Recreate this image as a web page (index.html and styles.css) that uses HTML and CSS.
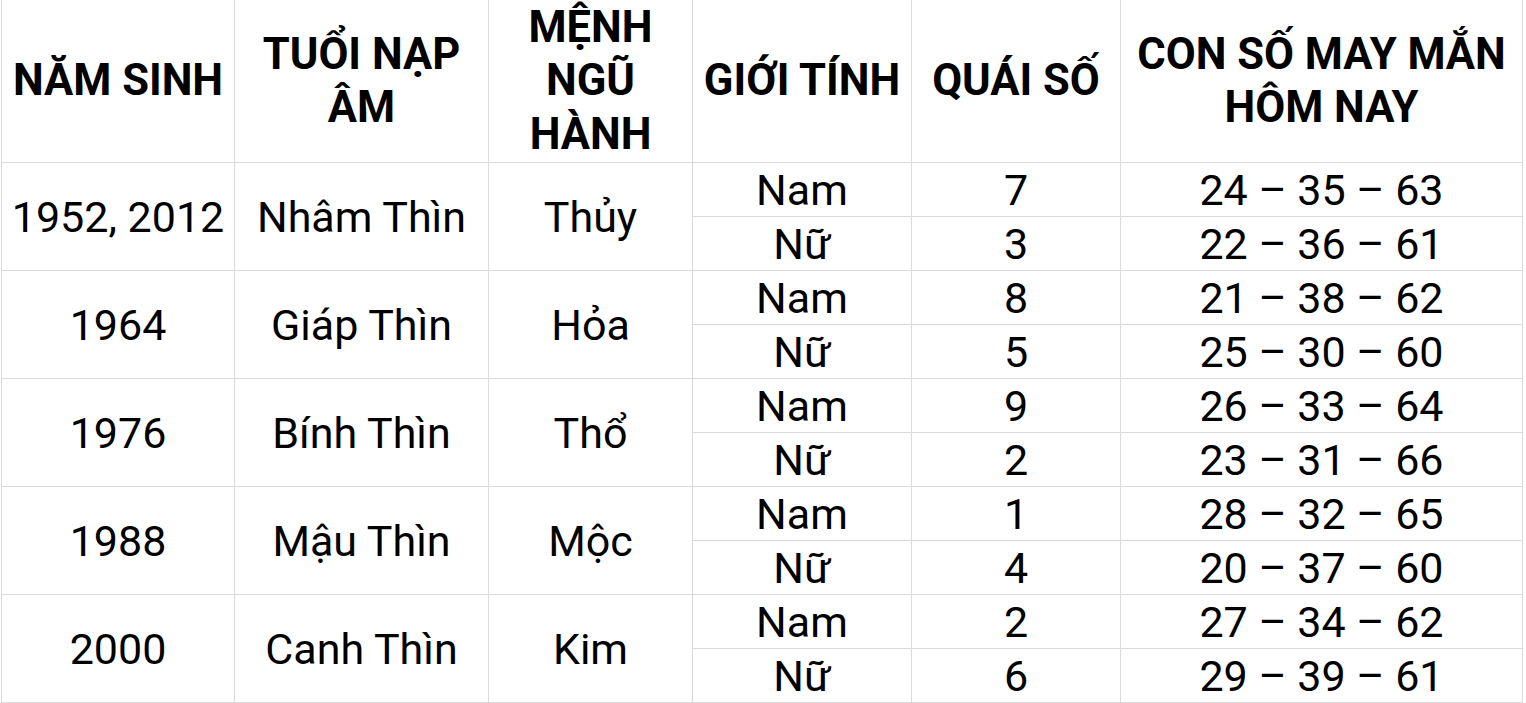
FILE: index.html
```html
<!DOCTYPE html>
<html lang="vi">
<head>
<meta charset="utf-8">
<link rel="stylesheet" href="styles.css">
</head>
<body>
<table class="luck">
  <colgroup>
    <col class="c1"><col class="c2"><col class="c3"><col class="c4"><col class="c5"><col class="c6">
  </colgroup>
  <thead>
    <tr class="head">
      <th>NĂM SINH</th>
      <th>TUỔI NẠP<br>ÂM</th>
      <th>MỆNH<br>NGŨ<br>HÀNH</th>
      <th>GIỚI TÍNH</th>
      <th>QUÁI SỐ</th>
      <th>CON SỐ MAY MẮN<br>HÔM NAY</th>
    </tr>
  </thead>
  <tbody>
    <tr><td rowspan="2">1952, 2012</td><td rowspan="2">Nhâm Thìn</td><td rowspan="2">Thủy</td><td>Nam</td><td>7</td><td>24 – 35 – 63</td></tr>
    <tr><td>Nữ</td><td>3</td><td>22 – 36 – 61</td></tr>
    <tr><td rowspan="2">1964</td><td rowspan="2">Giáp Thìn</td><td rowspan="2">Hỏa</td><td>Nam</td><td>8</td><td>21 – 38 – 62</td></tr>
    <tr><td>Nữ</td><td>5</td><td>25 – 30 – 60</td></tr>
    <tr><td rowspan="2">1976</td><td rowspan="2">Bính Thìn</td><td rowspan="2">Thổ</td><td>Nam</td><td>9</td><td>26 – 33 – 64</td></tr>
    <tr><td>Nữ</td><td>2</td><td>23 – 31 – 66</td></tr>
    <tr><td rowspan="2">1988</td><td rowspan="2">Mậu Thìn</td><td rowspan="2">Mộc</td><td>Nam</td><td>1</td><td>28 – 32 – 65</td></tr>
    <tr><td>Nữ</td><td>4</td><td>20 – 37 – 60</td></tr>
    <tr><td rowspan="2">2000</td><td rowspan="2">Canh Thìn</td><td rowspan="2">Kim</td><td>Nam</td><td>2</td><td>27 – 34 – 62</td></tr>
    <tr><td>Nữ</td><td>6</td><td>29 – 39 – 61</td></tr>
  </tbody>
</table>
</body>
</html>
```

FILE: styles.css
```css
html, body {
  margin: 0;
  padding: 0;
  background: #ffffff;
}

.luck {
  margin-left: 1px;
  border-collapse: collapse;
  table-layout: fixed;
  width: 1521px;
  font-family: Roboto, "Noto Sans", sans-serif;
  color: #000000;
}

.c1 { width: 233px; }
.c2 { width: 254px; }
.c3 { width: 204px; }
.c4 { width: 219px; }
.c5 { width: 209px; }
.c6 { width: 402px; }

.luck th,
.luck td {
  border: 1px solid #dadada;
  padding: 0;
  text-align: center;
  vertical-align: middle;
  white-space: nowrap;
}

.luck th {
  border-top: none;
  font-weight: 700;
  font-size: 43.5px;
  line-height: 53.5px;
  height: 162px;
}

.luck td {
  font-weight: 400;
  font-size: 43px;
  line-height: 44px;
  height: 53px;
}
```
